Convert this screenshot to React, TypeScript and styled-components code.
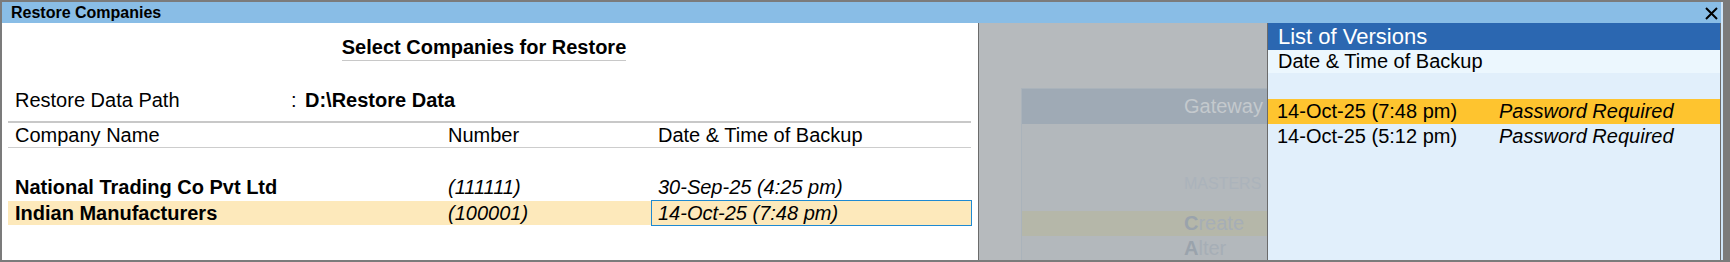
import React from "react";
import styled, { createGlobalStyle } from "styled-components";

const GlobalStyle = createGlobalStyle`
  html, body { margin: 0; padding: 0; background: #ffffff; }
  body { font-family: "Liberation Sans", Arial, sans-serif; color: #000; }
  * { box-sizing: border-box; }
`;

const Window = styled.div`
  width: 1730px;
  height: 262px;
  border: 2px solid #7b7b7b;
  border-right-width: 7px;
  display: flex;
  flex-direction: column;
  overflow: hidden;
`;

const Inner = styled.div`
  flex: 1;
  display: flex;
  flex-direction: column;
  border-right: 2px solid #cfe6f9;
  min-height: 0;
`;

const TitleBar = styled.div`
  height: 21px;
  flex: none;
  background: #89bde6;
  display: flex;
  align-items: center;
  justify-content: space-between;
  padding: 0 3px 0 9px;
`;

const TitleText = styled.span`
  font-weight: bold;
  font-size: 16px;
  line-height: 21px;
`;

const CloseButton = styled.span`
  display: flex;
  width: 14px;
  height: 14px;
  align-items: center;
  justify-content: center;
  margin-top: 1px;
`;

const Body = styled.div`
  flex: 1;
  display: flex;
  min-height: 0;
`;

const LeftPanel = styled.div`
  width: 977px;
  flex: none;
  background: #ffffff;
  padding: 0 7px 0 6px;
  border-right: 1px solid #6b6b6b;
  display: flex;
  flex-direction: column;
`;

const Heading = styled.div`
  margin-top: 13px;
  display: flex;
  justify-content: center;
  padding-right: 11px;
`;

const HeadingText = styled.span`
  font-weight: bold;
  font-size: 20px;
  line-height: 22px;
  padding-bottom: 2px;
  border-bottom: 1px solid #c8c8c8;
`;

const PathRow = styled.div`
  margin-top: 27px;
  display: flex;
  font-size: 20px;
  line-height: 24px;
`;

const PathLabel = styled.span`
  width: 283px;
  padding-left: 7px;
`;

const Colon = styled.span`
  width: 14px;
`;

const PathValue = styled.span`
  font-weight: bold;
`;

const TopRule = styled.div`
  margin-top: 9px;
  height: 2px;
  background: #c8c8c8;
`;

const GridRow = styled.div`
  display: grid;
  grid-template-columns: 433px 210px 321px;
`;

const HeaderRow = styled(GridRow)`
  border-bottom: 1px solid #cdcdcd;
  font-size: 20px;
`;

const HeadCell = styled.div`
  padding: 0 7px;
  line-height: 24px;
  white-space: nowrap;
`;

const Rows = styled.div`
  margin-top: 26px;
  display: flex;
  flex-direction: column;
`;

const Cell = styled.div<{ $hl?: boolean; $focus?: boolean; $bold?: boolean; $italic?: boolean }>`
  border-style: solid;
  border-color: ${(p) => (p.$focus ? "#1e8ad2" : "transparent")};
  border-width: ${(p) => (p.$focus ? "1px" : "1px 0")};
  background: ${(p) => (p.$hl ? "#fde9bb" : "transparent")};
  background-clip: padding-box;
  padding: ${(p) => (p.$focus ? "0 6px" : "0 7px")};
  font-size: 20px;
  line-height: 24px;
  font-weight: ${(p) => (p.$bold ? "bold" : "normal")};
  font-style: ${(p) => (p.$italic ? "italic" : "normal")};
  white-space: nowrap;
`;

const Backdrop = styled.div`
  flex: 1;
  background: #b6babd;
  overflow: hidden;
  padding: 65px 0 0 42px;
`;

const GatewayPanel = styled.div`
  width: 500px;
  height: 100%;
  background: #b3b8bc;
  border-left: 1px solid #aab3bb;
  border-top: 1px solid #aab3bb;
  display: flex;
  flex-direction: column;
`;

const GatewayHeader = styled.div`
  height: 35px;
  background: #9faab5;
  color: #c4c9cd;
  font-size: 20px;
  line-height: 35px;
  padding-left: 162px;
  white-space: nowrap;
`;

const MastersLabel = styled.div`
  margin-top: 50px;
  padding-left: 162px;
  font-size: 16px;
  line-height: 20px;
  color: #abb3bb;
`;

const MenuItem = styled.div<{ $hl?: boolean }>`
  height: 25px;
  line-height: 25px;
  padding-left: 162px;
  font-size: 20px;
  color: #a6aeb6;
  background: ${(p) => (p.$hl ? "#b5b7a9" : "transparent")};
  margin-top: ${(p) => (p.$hl ? "17px" : "0")};
`;

const HotKey = styled.b`
  color: #9aa3ac;
`;

const VersionsPanel = styled.div`
  width: 454px;
  flex: none;
  background: #e1effb;
  border-left: 1px solid #6b6b6b;
  border-right: 1px solid #6b6b6b;
  display: flex;
  flex-direction: column;
`;

const VersionsHeader = styled.div`
  height: 27px;
  background: #2b67b1;
  color: #ffffff;
  font-size: 22px;
  line-height: 27px;
  padding-left: 10px;
`;

const VersionsSub = styled.div`
  height: 23px;
  background: #ecf7fe;
  font-size: 20px;
  line-height: 23px;
  padding-left: 10px;
`;

const VersionsList = styled.div`
  margin-top: 26px;
  display: flex;
  flex-direction: column;
`;

const VersionRow = styled.div<{ $selected?: boolean }>`
  height: 25px;
  display: grid;
  grid-template-columns: 222px 1fr;
  padding-left: 9px;
  font-size: 20px;
  line-height: 25px;
  background: ${(p) => (p.$selected ? "#fec42f" : "transparent")};
`;

const VersionNote = styled.span`
  font-style: italic;
`;

const companies = [
  { name: "National Trading Co Pvt Ltd", number: "(111111)", date: "30-Sep-25 (4:25 pm)", active: false },
  { name: "Indian Manufacturers", number: "(100001)", date: "14-Oct-25 (7:48 pm)", active: true },
];

const versions = [
  { date: "14-Oct-25 (7:48 pm)", note: "Password Required", selected: true },
  { date: "14-Oct-25 (5:12 pm)", note: "Password Required", selected: false },
];

export default function App() {
  return (
    <>
      <GlobalStyle />
      <Window>
        <Inner>
          <TitleBar>
            <TitleText>Restore Companies</TitleText>
            <CloseButton>
              <svg width="13" height="13" viewBox="0 0 13 13">
                <path d="M1 1 L12 12 M12 1 L1 12" stroke="#000" strokeWidth="2" fill="none" />
              </svg>
            </CloseButton>
          </TitleBar>
          <Body>
            <LeftPanel>
              <Heading>
                <HeadingText>Select Companies for Restore</HeadingText>
              </Heading>
              <PathRow>
                <PathLabel>Restore Data Path</PathLabel>
                <Colon>:</Colon>
                <PathValue>D:\Restore Data</PathValue>
              </PathRow>
              <TopRule />
              <HeaderRow>
                <HeadCell>Company Name</HeadCell>
                <HeadCell>Number</HeadCell>
                <HeadCell>Date &amp; Time of Backup</HeadCell>
              </HeaderRow>
              <Rows>
                {companies.map((c) => (
                  <GridRow key={c.name}>
                    <Cell $bold $hl={c.active}>{c.name}</Cell>
                    <Cell $italic $hl={c.active}>{c.number}</Cell>
                    <Cell $italic $hl={c.active} $focus={c.active}>{c.date}</Cell>
                  </GridRow>
                ))}
              </Rows>
            </LeftPanel>
            <Backdrop>
              <GatewayPanel>
                <GatewayHeader>Gateway</GatewayHeader>
                <MastersLabel>MASTERS</MastersLabel>
                <MenuItem $hl>
                  <HotKey>C</HotKey>reate
                </MenuItem>
                <MenuItem>
                  <HotKey>A</HotKey>lter
                </MenuItem>
              </GatewayPanel>
            </Backdrop>
            <VersionsPanel>
              <VersionsHeader>List of Versions</VersionsHeader>
              <VersionsSub>Date &amp; Time of Backup</VersionsSub>
              <VersionsList>
                {versions.map((v) => (
                  <VersionRow key={v.date} $selected={v.selected}>
                    <span>{v.date}</span>
                    <VersionNote>{v.note}</VersionNote>
                  </VersionRow>
                ))}
              </VersionsList>
            </VersionsPanel>
          </Body>
        </Inner>
      </Window>
    </>
  );
}
